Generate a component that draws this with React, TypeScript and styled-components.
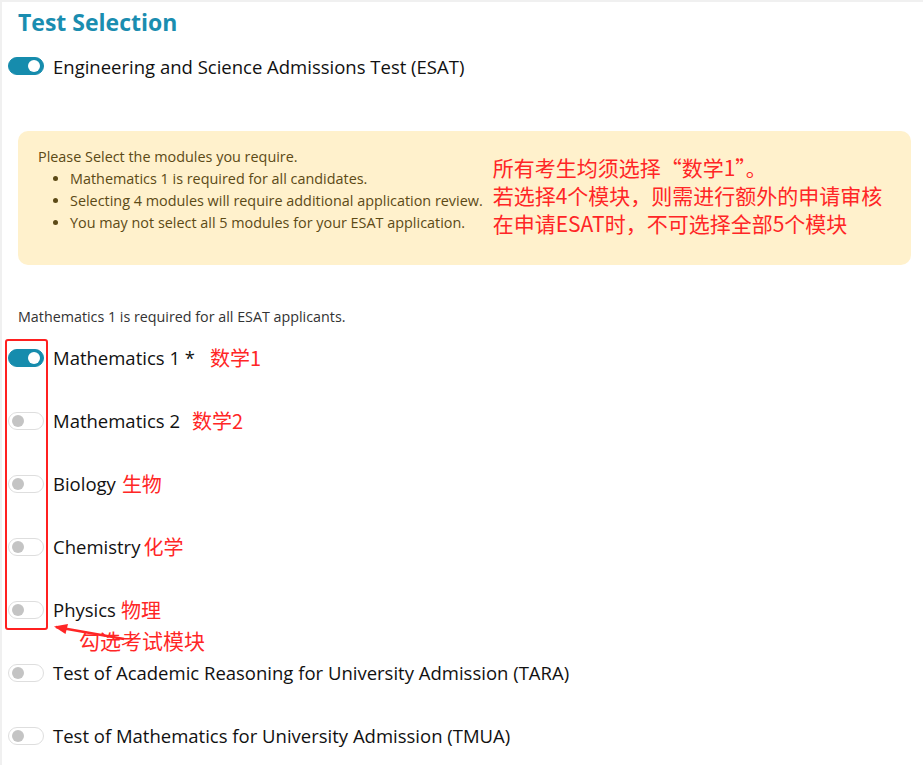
import styled, { createGlobalStyle } from "styled-components";

const GlobalStyle = createGlobalStyle`
  html, body {
    margin: 0;
    padding: 0;
    background: #ffffff;
  }
  body {
    font-family: "Open Sans", "Noto Sans CJK SC", sans-serif;
    color: #111;
  }
`;

const Frame = styled.div`
  box-sizing: border-box;
  width: 923px;
  height: 765px;
  border-top: 2px solid #f0f0f0;
  border-left: 2px solid #f0f0f0;
  padding: 0 12px 0 6px;
  overflow: hidden;
`;

const Title = styled.h2`
  margin: -2px 0 0;
  padding-left: 10px;
  height: 44px;
  line-height: 44px;
  font-size: 23px;
  font-weight: 700;
  color: #1a8db0;
`;

const Row = styled.div<{ $h: number }>`
  display: flex;
  align-items: center;
  height: ${(p) => p.$h}px;
`;

const Track = styled.span<{ $on: boolean }>`
  box-sizing: border-box;
  flex: none;
  width: 36px;
  height: 18px;
  border-radius: 9px;
  border: 1px solid ${(p) => (p.$on ? "#168cad" : "#dedede")};
  background: ${(p) => (p.$on ? "#168cad" : "#ffffff")};
  display: flex;
  align-items: center;
  justify-content: ${(p) => (p.$on ? "flex-end" : "flex-start")};
  padding: 0 3px;
`;

const Knob = styled.span<{ $on: boolean }>`
  width: 12px;
  height: 12px;
  border-radius: 50%;
  background: ${(p) => (p.$on ? "#ffffff" : "#c4c4c4")};
`;

const Label = styled.span`
  margin-left: 9px;
  font-size: 18.5px;
  color: #111;
  white-space: nowrap;
`;

const RedNote = styled.span<{ $gap: number }>`
  margin-left: ${(p) => p.$gap}px;
  font-family: "Noto Sans CJK SC", sans-serif;
  font-size: 20px;
  color: #ff2626;
  white-space: nowrap;
`;

const InfoBox = styled.div`
  box-sizing: border-box;
  margin: 43px 0 0 10px;
  height: 134px;
  border-radius: 10px;
  background: #fff1cc;
  display: flex;
  padding: 15px 20px 0 20px;
  gap: 10px;
`;

const InfoText = styled.div`
  font-size: 14.4px;
  line-height: 22px;
  color: #5c4a16;
  white-space: nowrap;
`;

const InfoList = styled.ul`
  margin: 0;
  padding-left: 32px;
`;

const CnNotes = styled.div`
  padding-top: 7px;
  font-family: "Noto Sans CJK SC", sans-serif;
  font-size: 21px;
  line-height: 28px;
  color: #ff2626;
  white-space: nowrap;
`;

const Hint = styled.div`
  margin: 42px 0 0 10px;
  height: 20px;
  line-height: 20px;
  font-size: 14.3px;
  color: #333;
`;

const ModuleGroup = styled.div`
  position: relative;
  margin-top: -1px;
`;

const Highlight = styled.div`
  position: absolute;
  left: -3px;
  top: 13px;
  width: 43px;
  height: 291px;
  box-sizing: border-box;
  border: 2px solid #ff2020;
  border-radius: 3px;
  pointer-events: none;
`;

const Callout = styled.div`
  position: absolute;
  left: 44px;
  top: 297px;
  display: flex;
  align-items: flex-end;
  pointer-events: none;
`;

const CalloutText = styled.span`
  margin-left: -53px;
  margin-bottom: -10px;
  font-family: "Noto Sans CJK SC", sans-serif;
  font-size: 21px;
  color: #ff2626;
  white-space: nowrap;
`;

function Toggle({ on }: { on: boolean }) {
  return (
    <Track $on={on}>
      <Knob $on={on} />
    </Track>
  );
}

const modules = [
  { name: "Mathematics 1 *", cn: "数学1", gap: 15, on: true },
  { name: "Mathematics 2", cn: "数学2", gap: 12, on: false },
  { name: "Biology", cn: "生物", gap: 6, on: false },
  { name: "Chemistry", cn: "化学", gap: 3, on: false },
  { name: "Physics", cn: "物理", gap: 5, on: false },
];

const otherTests = [
  "Test of Academic Reasoning for University Admission (TARA)",
  "Test of Mathematics for University Admission (TMUA)",
];

export default function App() {
  return (
    <>
      <GlobalStyle />
      <Frame>
        <Title>Test Selection</Title>
        <Row $h={44}>
          <Toggle on />
          <Label>Engineering and Science Admissions Test (ESAT)</Label>
        </Row>

        <InfoBox>
          <InfoText>
            Please Select the modules you require.
            <InfoList>
              <li>Mathematics 1 is required for all candidates.</li>
              <li>Selecting 4 modules will require additional application review.</li>
              <li>You may not select all 5 modules for your ESAT application.</li>
            </InfoList>
          </InfoText>
          <CnNotes>
            所有考生均须选择“数学1”。
            <br />
            若选择4个模块，则需进行额外的申请审核
            <br />
            在申请ESAT时，不可选择全部5个模块
          </CnNotes>
        </InfoBox>

        <Hint>Mathematics 1 is required for all ESAT applicants.</Hint>

        <ModuleGroup>
          {modules.map((m) => (
            <Row $h={63} key={m.name}>
              <Toggle on={m.on} />
              <Label>{m.name}</Label>
              <RedNote $gap={m.gap}>{m.cn}</RedNote>
            </Row>
          ))}
          <Highlight />
          <Callout>
            <svg width="80" height="22" viewBox="0 0 80 22">
              <path d="M4 4 L72 16" stroke="#ff2626" strokeWidth="2.4" fill="none" />
              <path d="M2 3.5 L16 1 L13.5 11 Z" fill="#ff2626" />
            </svg>
            <CalloutText>勾选考试模块</CalloutText>
          </Callout>
        </ModuleGroup>

        {otherTests.map((t) => (
          <Row $h={63} key={t}>
            <Toggle on={false} />
            <Label>{t}</Label>
          </Row>
        ))}
      </Frame>
    </>
  );
}
